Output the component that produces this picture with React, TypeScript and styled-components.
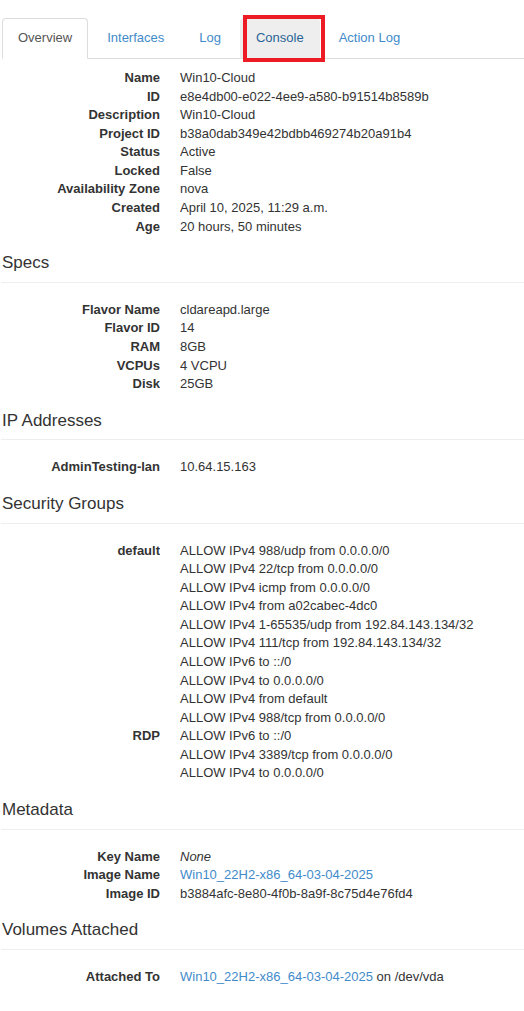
import { Fragment, ReactNode } from 'react';
import styled, { createGlobalStyle } from 'styled-components';

const GlobalStyle = createGlobalStyle`
  * {
    box-sizing: border-box;
  }
  body {
    margin: 0;
    background: #fff;
    color: #333;
    font-family: 'Liberation Sans', Arial, sans-serif;
    font-size: 13px;
    line-height: 1.428571429;
  }
`;

const Page = styled.div`
  padding: 0 0 30px 2px;
`;

const TabList = styled.ul`
  display: flex;
  gap: 3px;
  list-style: none;
  margin: 18px 0 0 0;
  padding: 0;
  border-bottom: 1px solid #ddd;
`;

const TabItem = styled.li`
  position: relative;
  margin-bottom: -1px;
`;

const TabLink = styled.a<{ $active?: boolean; $hover?: boolean }>`
  display: block;
  padding: 10px 15px;
  border: 1px solid transparent;
  border-radius: 4px 4px 0 0;
  color: #428bca;
  text-decoration: none;
  cursor: pointer;

  ${({ $active }) =>
    $active &&
    `
    color: #555;
    background: #fff;
    border-color: #ddd #ddd transparent;
  `}

  ${({ $hover }) =>
    $hover &&
    `
    color: #2a6496;
    background: #eee;
    border-color: #eee #eee #ddd;
  `}
`;

// red box drawn over the Console tab in the screenshot
const Callout = styled.span`
  position: absolute;
  top: -3px;
  left: 3px;
  right: -5px;
  bottom: -3px;
  border: 4px solid #ed1c24;
  pointer-events: none;
`;

const Overview = styled.div`
  padding-top: 10.5px;
`;

const Heading = styled.h4`
  margin: 0 0 9px;
  font-size: 17px;
  font-weight: 500;
  line-height: 1.1;
  color: #333;
`;

const Rule = styled.div`
  border-top: 1px solid #eee;
  margin: 0 0 18px -1px;
`;

const DetailList = styled.dl`
  display: grid;
  grid-template-columns: 158px 1fr;
  column-gap: 20px;
  margin: 0 0 18px;
`;

const Term = styled.dt`
  font-weight: bold;
  text-align: right;
  white-space: nowrap;
  overflow: hidden;
  text-overflow: ellipsis;
`;

const Desc = styled.dd`
  margin: 0;
  white-space: nowrap;
`;

const Link = styled.a`
  color: #428bca;
  text-decoration: none;
`;

const Muted = styled.em`
  font-style: italic;
`;

type Row = [string, ReactNode];

const tabs = ['Overview', 'Interfaces', 'Log', 'Console', 'Action Log'];

const overview: Row[] = [
  ['Name', 'Win10-Cloud'],
  ['ID', 'e8e4db00-e022-4ee9-a580-b91514b8589b'],
  ['Description', 'Win10-Cloud'],
  ['Project ID', 'b38a0dab349e42bdbb469274b20a91b4'],
  ['Status', 'Active'],
  ['Locked', 'False'],
  ['Availability Zone', 'nova'],
  ['Created', 'April 10, 2025, 11:29 a.m.'],
  ['Age', '20 hours, 50 minutes'],
];

const imageName = 'Win10_22H2-x86_64-03-04-2025';

const lines = (items: string[]) => items.map((r) => <div key={r}>{r}</div>);

const sections: { title: string; rows: Row[] }[] = [
  {
    title: 'Specs',
    rows: [
      ['Flavor Name', 'cldareapd.large'],
      ['Flavor ID', '14'],
      ['RAM', '8GB'],
      ['VCPUs', '4 VCPU'],
      ['Disk', '25GB'],
    ],
  },
  {
    title: 'IP Addresses',
    rows: [['AdminTesting-lan', '10.64.15.163']],
  },
  {
    title: 'Security Groups',
    rows: [
      [
        'default',
        lines([
          'ALLOW IPv4 988/udp from 0.0.0.0/0',
          'ALLOW IPv4 22/tcp from 0.0.0.0/0',
          'ALLOW IPv4 icmp from 0.0.0.0/0',
          'ALLOW IPv4 from a02cabec-4dc0',
          'ALLOW IPv4 1-65535/udp from 192.84.143.134/32',
          'ALLOW IPv4 111/tcp from 192.84.143.134/32',
          'ALLOW IPv6 to ::/0',
          'ALLOW IPv4 to 0.0.0.0/0',
          'ALLOW IPv4 from default',
          'ALLOW IPv4 988/tcp from 0.0.0.0/0',
        ]),
      ],
      [
        'RDP',
        lines([
          'ALLOW IPv6 to ::/0',
          'ALLOW IPv4 3389/tcp from 0.0.0.0/0',
          'ALLOW IPv4 to 0.0.0.0/0',
        ]),
      ],
    ],
  },
  {
    title: 'Metadata',
    rows: [
      ['Key Name', <Muted>None</Muted>],
      ['Image Name', <Link href='#'>{imageName}</Link>],
      ['Image ID', 'b3884afc-8e80-4f0b-8a9f-8c75d4e76fd4'],
    ],
  },
  {
    title: 'Volumes Attached',
    rows: [
      [
        'Attached To',
        <>
          <Link href='#'>{imageName}</Link> on /dev/vda
        </>,
      ],
    ],
  },
];

const Details = ({ rows }: { rows: Row[] }) => (
  <DetailList>
    {rows.map(([label, value]) => (
      <Fragment key={label}>
        <Term>{label}</Term>
        <Desc>{value}</Desc>
      </Fragment>
    ))}
  </DetailList>
);

const App = () => {
  return (
    <Page>
      <GlobalStyle />
      <TabList>
        {tabs.map((t) => (
          <TabItem key={t}>
            <TabLink $active={t === 'Overview'} $hover={t === 'Console'}>
              {t}
            </TabLink>
            {t === 'Console' && <Callout />}
          </TabItem>
        ))}
      </TabList>

      <Overview>
        <Details rows={overview} />
        {sections.map((s) => (
          <section key={s.title}>
            <Heading>{s.title}</Heading>
            <Rule />
            <Details rows={s.rows} />
          </section>
        ))}
      </Overview>
    </Page>
  );
};

export default App;
